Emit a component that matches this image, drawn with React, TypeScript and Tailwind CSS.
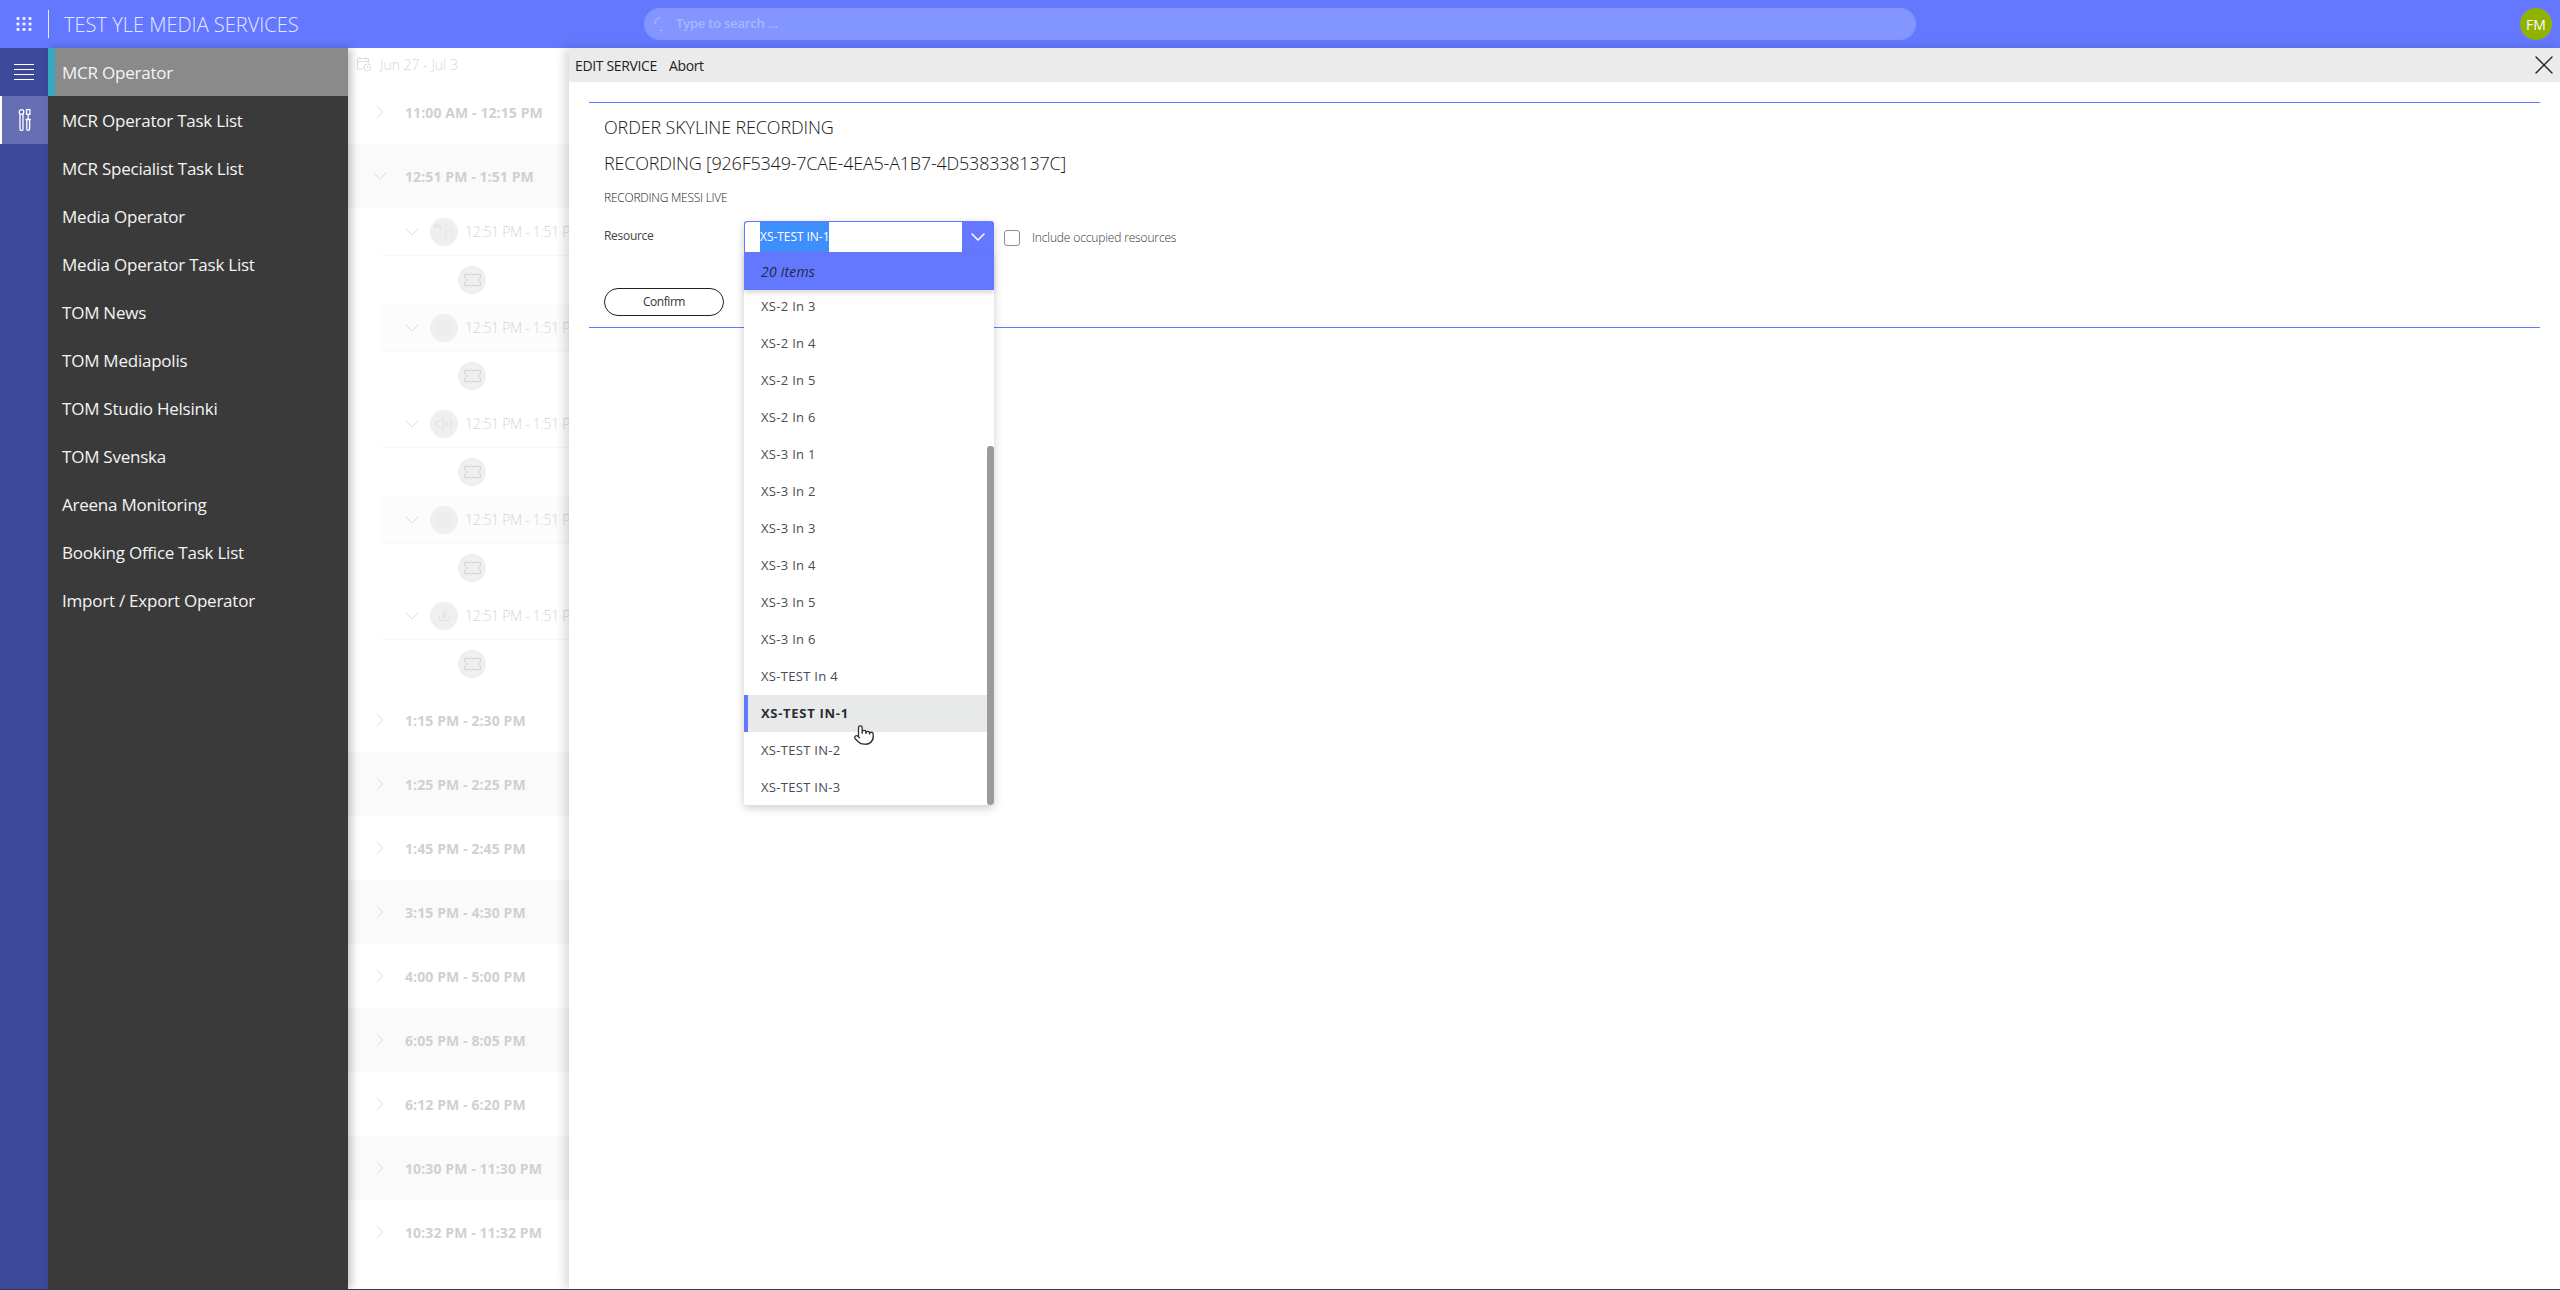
import React from 'react';
import { ChevronDown, ChevronRight, Pointer, Volume2, Download, X } from 'lucide-react';

const FONT = "font-['Open_Sans','Noto_Sans',sans-serif]";

const navItems = [
  'MCR Operator',
  'MCR Operator Task List',
  'MCR Specialist Task List',
  'Media Operator',
  'Media Operator Task List',
  'TOM News',
  'TOM Mediapolis',
  'TOM Studio Helsinki',
  'TOM Svenska',
  'Areena Monitoring',
  'Booking Office Task List',
  'Import / Export Operator',
];

const laterSlots = [
  '1:15 PM - 2:30 PM',
  '1:25 PM - 2:25 PM',
  '1:45 PM - 2:45 PM',
  '3:15 PM - 4:30 PM',
  '4:00 PM - 5:00 PM',
  '6:05 PM - 8:05 PM',
  '6:12 PM - 6:20 PM',
  '10:30 PM - 11:30 PM',
  '10:32 PM - 11:32 PM',
];

const resources = [
  'XS-2 In 3',
  'XS-2 In 4',
  'XS-2 In 5',
  'XS-2 In 6',
  'XS-3 In 1',
  'XS-3 In 2',
  'XS-3 In 3',
  'XS-3 In 4',
  'XS-3 In 5',
  'XS-3 In 6',
  'XS-TEST In 4',
  'XS-TEST IN-1',
  'XS-TEST IN-2',
  'XS-TEST IN-3',
];

const GridDots = () => (
  <svg width="16" height="14" viewBox="0 0 16 14" fill="#e8ebff">
    {[0, 6, 12].map((x) =>
      [0, 5.5, 11].map((y) => <rect key={`${x}-${y}`} x={x + 0.5} y={y} width="3" height="3" rx="0.8" />),
    )}
  </svg>
);

const ToolsIcon = () => (
  <svg width="14" height="22" viewBox="0 0 14 22" fill="none" stroke="#fff" strokeWidth="1.3">
    <circle cx="3.5" cy="3" r="2.3" />
    <path d="M2 5v15a1.5 1.5 0 0 0 3 0V5" />
    <rect x="8.5" y="0.7" width="3.4" height="4.6" />
    <path d="M10.2 5.3V10M7.5 10.5h5.4M8.8 11v9a1.4 1.4 0 0 0 2.8 0v-9" />
  </svg>
);

const Ticket = () => (
  <svg width="17" height="12" viewBox="0 0 17 12" fill="none" stroke="#d8d2da" strokeWidth="1">
    <path d="M0.5 0.5h16v3.5a2 2 0 0 0 0 4v3.5h-16v-3.5a2 2 0 0 0 0-4z" />
  </svg>
);

const Cells = () => (
  <svg width="14" height="14" viewBox="0 0 14 14" fill="none" stroke="#e7e9ec" strokeWidth="0.7">
    {[2.5, 7, 11.5].map((x) =>
      [2.5, 7, 11.5].map((y) => <circle key={`${x}-${y}`} cx={x} cy={y} r="2.2" />),
    )}
  </svg>
);

const RxBox = () => (
  <svg width="22" height="22" viewBox="0 0 22 22" fill="none" stroke="#e2e4e6" strokeWidth="0.7">
    <path d="M13 4l6 3.5v7L13 18l-6-3.5v-7zM7 7.5l6 3.5 6-3.5M13 11v7M13 1v6" />
    <text x="1" y="7" fontSize="6" fill="#dcdcdc" stroke="none">RX</text>
  </svg>
);

const CircleBadge = ({ children }: { children?: React.ReactNode }) => (
  <div className="flex h-7 w-7 shrink-0 items-center justify-center rounded-full bg-[#efefef]">{children}</div>
);

const SubRow = ({ icon, shaded }: { icon: React.ReactNode; shaded?: boolean }) => (
  <div>
    <div className={`ml-[32px] flex h-[48px] items-center border-b border-[#f8f8f8] pl-[20px] ${shaded ? 'bg-[#fcfcfc]' : ''}`}>
      <ChevronDown className="mr-[6px] h-6 w-6 shrink-0 text-[#d8d8d8]" strokeWidth={0.8} />
      <CircleBadge>{icon}</CircleBadge>
      <span className="ml-[7px] whitespace-nowrap text-[14px] font-light tracking-[-0.3px] text-[#d6d6d6]">12:51 PM - 1:51 PM</span>
    </div>
    <div className="flex h-[48px] items-center pl-[110px]">
      <CircleBadge>
        <Ticket />
      </CircleBadge>
    </div>
  </div>
);

const SlotRow = ({ label, shaded, open }: { label: string; shaded?: boolean; open?: boolean }) => {
  const Chevron = open ? ChevronDown : ChevronRight;
  return (
    <div className={`flex h-[64px] shrink-0 items-center pl-[20px] ${shaded ? 'bg-[#fafafa]' : ''}`}>
      <Chevron className="mr-[13px] h-6 w-6 shrink-0 text-[#d8d8d8]" strokeWidth={0.8} />
      <span className="mt-[1px] whitespace-nowrap text-[14px] font-bold tracking-[0.1px] text-[#d0d0d0]">{label}</span>
    </div>
  );
};

const ResourceDropdown = () => (
  <div className="absolute left-[155px] top-[118px] z-30 w-[250px] rounded-[3px] shadow-[0_3px_10px_rgba(0,0,0,0.2)]">
    <div className="flex h-[31px] rounded-t-[3px] bg-[#6478ff] pl-px pt-px">
      <div className="flex h-[30px] w-[217px] items-center rounded-tl-[3px] bg-white pl-[15px]">
        <span className="flex h-full items-center bg-[#3e8efc] text-[12px] tracking-[-0.05px] text-white">XS-TEST IN-1</span>
      </div>
      <div className="flex flex-1 items-center justify-center">
        <ChevronDown className="h-6 w-6 text-white" strokeWidth={1.5} />
      </div>
    </div>
    <div className="relative z-10 flex h-[38px] items-center bg-[#6478ff] pl-[17px] text-[14px] italic tracking-[0.2px] text-[#1f2a44] shadow-[0_3px_5px_rgba(0,0,0,0.15)]">
      20 items
    </div>
    <div className="relative h-[515px] overflow-hidden rounded-b-[3px] bg-white">
      <div className="-mt-[2px]">
        {resources.map((name) => {
          const active = name === 'XS-TEST IN-1';
          return (
            <div
              key={name}
              className={`flex h-[37px] items-center pt-px text-[13px] ${
                active
                  ? 'border-l-4 border-[#6478ff] bg-[#e8e9e9] pl-[13px] font-bold tracking-[0.7px] text-[#2b2b33]'
                  : 'pl-[17px] font-normal tracking-[0.3px] text-[#4b4b52]'
              }`}
            >
              {name}
            </div>
          );
        })}
      </div>
      <div className="absolute bottom-0 right-0 top-[156px] w-[7px] rounded-[3px] bg-[#9b9b9b]" />
    </div>
    <Pointer className="absolute left-[109px] top-[501px] h-[26px] w-[22px] fill-white text-[#2b2b3a]" strokeWidth={1.4} />
  </div>
);

const App = () => {
  return (
    <div className={`flex h-[1290px] w-[2560px] flex-col overflow-hidden border-b border-[#2f3b45] bg-white ${FONT}`}>
      <header className="flex h-[48px] shrink-0 items-center bg-[#6478ff]">
        <div className="flex h-[28px] w-[49px] shrink-0 items-center justify-center border-r border-[#e8ebff]">
          <GridDots />
        </div>
        <span className="ml-[15px] mt-px w-[580px] whitespace-nowrap text-[20px] font-light text-[#e4e8ff]">
          TEST YLE MEDIA SERVICES
        </span>
        <div className="flex h-[32px] w-[1272px] items-center rounded-full bg-[#8396ff] pl-[9px]">
          <svg width="14" height="16" viewBox="0 0 14 16" fill="none" stroke="#b9c3ff" strokeWidth="1">
            <path d="M7 1.5A6 6 0 0 0 2 8" />
            <path d="M7 14.5h2" />
          </svg>
          <span className="ml-[9px] text-[13px] font-semibold tracking-[-0.2px] text-[#aab6ff]">Type to search ...</span>
        </div>
        <div className="ml-auto mr-[8px] flex h-[32px] w-[32px] items-center justify-center rounded-full bg-[#8fb300] text-[14px] text-white">
          FM
        </div>
      </header>

      <div className="flex min-h-0 flex-1">
        <aside className="flex w-[48px] shrink-0 flex-col bg-[#3d4a9c]">
          <div className="flex h-[48px] flex-col items-center justify-center gap-[4px]">
            {[0, 1, 2, 3].map((i) => (
              <div key={i} className="h-px w-[20px] bg-white" />
            ))}
          </div>
          <div className="flex h-[48px] items-center justify-center border-l-2 border-white bg-[#666fb3]">
            <ToolsIcon />
          </div>
        </aside>

        <nav className="relative z-10 w-[300px] shrink-0 bg-[#3a3a3a] shadow-[3px_0_8px_rgba(0,0,0,0.25)]">
          {navItems.map((item, i) => (
            <div
              key={item}
              className={`flex h-[48px] items-center pt-px text-[17px] tracking-[-0.23px] text-[#f4f4f4] ${
                i === 0 ? 'border-l-[7px] border-[#35a9bd] bg-[#8a8a8a] pl-[7px]' : 'pl-[14px]'
              }`}
            >
              {item}
            </div>
          ))}
        </nav>

        <section className="w-[221px] shrink-0 overflow-hidden bg-white">
          <div className="flex h-[32px] items-center pl-[8px]">
            <svg width="16" height="16" viewBox="0 0 16 16" fill="none" stroke="#dcdcdc" strokeWidth="1">
              <path d="M7 13H1.5V2.5h11V7M1.5 5.5h11M4 1v2.5M10 1v2.5" />
              <circle cx="11.5" cy="11.5" r="3.5" />
              <path d="M11.5 10v1.6h1.4" />
            </svg>
            <span className="ml-[8px] text-[14px] font-light text-[#d8d8d8]">Jun 27 - Jul 3</span>
          </div>
          <SlotRow label="11:00 AM - 12:15 PM" />
          <SlotRow label="12:51 PM - 1:51 PM" shaded open />
          <SubRow icon={<RxBox />} />
          <SubRow icon={<Cells />} shaded />
          <SubRow icon={<Volume2 className="h-[18px] w-[18px] text-[#d6dadf]" strokeWidth={1} />} />
          <SubRow icon={<Cells />} shaded />
          <SubRow icon={<Download className="h-[13px] w-[13px] text-[#d6dadf]" strokeWidth={1.5} />} />
          {laterSlots.map((slot, i) => (
            <SlotRow key={slot} label={slot} shaded={i % 2 === 1} />
          ))}
        </section>

        <main className="relative z-20 flex min-w-0 flex-1 flex-col bg-white shadow-[-4px_0_10px_rgba(0,0,0,0.16)]">
          <div className="flex h-[34px] shrink-0 items-center bg-[#ebebeb] pl-[6px] text-[14px] tracking-[-0.35px] text-[#222]">
            <span>EDIT SERVICE</span>
            <span className="ml-[12px]">Abort</span>
            <X className="ml-auto h-8 w-8 text-[#222]" strokeWidth={1} />
          </div>
          <div className="relative mx-[20px] mt-[20px] h-[226px] border-y border-[#6478ff] pl-[15px]">
            <h1 className="mt-[10px] text-[18px] font-light leading-[28px] tracking-[-0.15px] text-[#161616]">ORDER SKYLINE RECORDING</h1>
            <h2 className="mt-[8px] text-[18px] font-light leading-[28px] tracking-[-0.22px] text-[#161616]">
              RECORDING [926F5349-7CAE-4EA5-A1B7-4D538338137C]
            </h2>
            <p className="mt-[13px] text-[12px] font-light leading-[16px] tracking-[-0.25px] text-[#222]">RECORDING MESSI LIVE</p>
            <p className="mt-[22px] text-[12px] leading-[16px] tracking-[-0.3px] text-[#444]">Resource</p>
            <div className="absolute left-[415px] top-[126px] flex items-center">
              <div className="h-[16px] w-[16px] rounded-[3px] border border-[#8c8c8c] bg-white" />
              <span className="ml-[12px] text-[12px] font-light tracking-[-0.15px] text-[#333]">Include occupied resources</span>
            </div>
            <button className="mt-[44px] block h-[28px] w-[120px] rounded-full border border-[#222] bg-white text-[12px] tracking-[-0.45px] text-[#333]">
              Confirm
            </button>
            <ResourceDropdown />
          </div>
        </main>
      </div>
    </div>
  );
};

export default App;
